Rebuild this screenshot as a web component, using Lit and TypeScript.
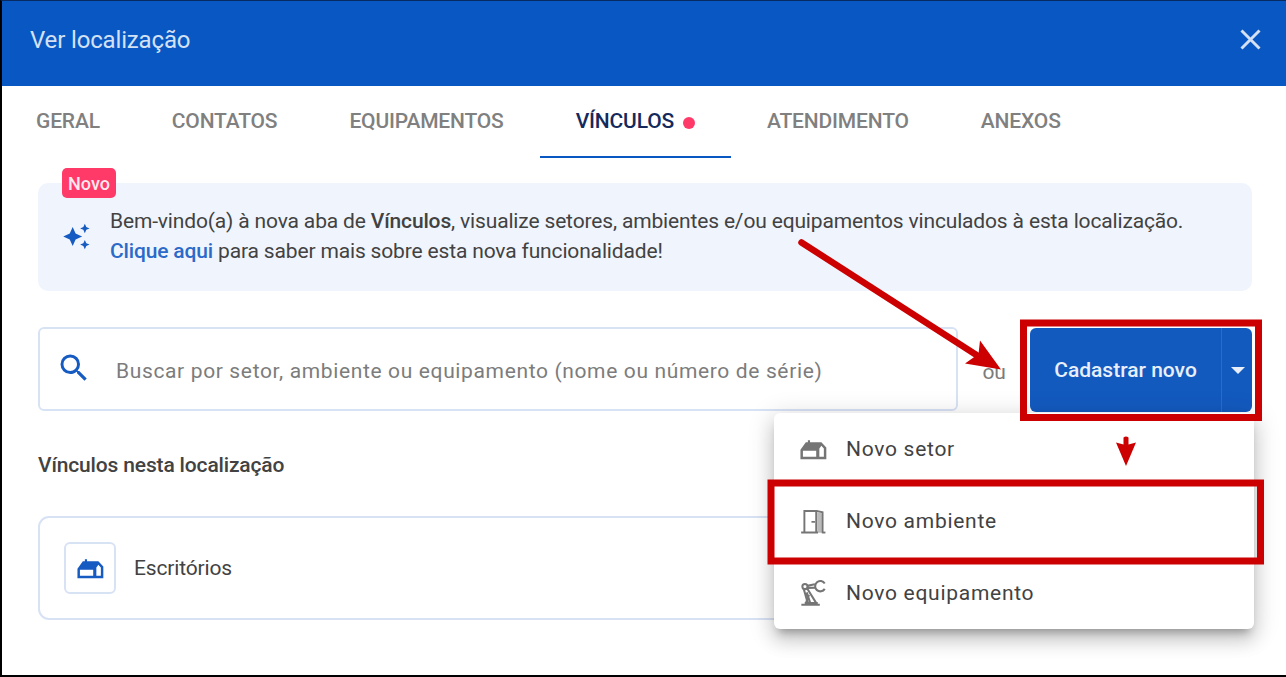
import { LitElement, css, html, svg } from 'lit';
import { customElement, property } from 'lit/decorators.js';

const icons: Record<string, unknown> = {
  close: svg`<path d="M4 4L20 20M20 4L4 20" fill="none" stroke="currentColor" stroke-width="2.6"/>`,
  search: svg`<path d="M15.5 14h-.79l-.28-.27A6.47 6.47 0 0 0 16 9.5 6.5 6.5 0 1 0 9.5 16c1.61 0 3.09-.59 4.23-1.57l.27.28v.79l5 4.99L20.49 19l-4.99-5zm-6 0C7.01 14 5 11.99 5 9.5S7.01 5 9.5 5 14 7.01 14 9.5 11.99 14 9.5 14z"/>`,
  sparkle: svg`<path d="M8.6 3.6L11.2 9.4L17 12L11.2 14.6L8.6 20.4L6 14.6L.2 12L6 9.4ZM19.4 .6L20.7 3.5L23.6 4.8L20.7 6.1L19.4 9L18.1 6.1L15.2 4.8L18.1 3.5ZM19.4 15L20.7 17.9L23.6 19.2L20.7 20.5L19.4 23.4L18.1 20.5L15.2 19.2L18.1 17.9Z"/>`,
  sector: svg`<path fill-rule="evenodd" d="M.4 20.6V12.2L5.2 5.6H7V3.8H8.9V5.6H19L23.4 10.2V20.6ZM2.6 13V18.4H14.4V13ZM17.2 18.4V11L19 8.6L21.2 11.2V18.4Z"/>`,
  door: svg`<path d="M1 21.8H16M3.9 21.8V2.6H14.4V21.8M10.2 12.3H13.3" fill="none" stroke="currentColor" stroke-width="1.7"/>
    <path d="M14.6 2.6L20.1 3.8V21.8" fill="none" stroke="currentColor" stroke-width="1.6"/>
    <path d="M15.4 3.8L19.5 4.6V22H15.4Z" opacity=".5"/>
    <path d="M19.4 21.8H22.6" stroke="currentColor" stroke-width="1.7"/>`,
  robot: svg`<g fill="none" stroke="currentColor" stroke-width="1.8">
    <circle cx="4.4" cy="5.8" r="2.3"/>
    <path d="M6.6 5.2L13.2 3.7M6.8 7L13.4 6.8M3.2 7.6L7 20.8M6.4 7.6L14.6 20.8M6 11L9.2 20.8M8 13.2L5.4 20M1.2 22H17.6M4.2 20.4H15.8"/>
    <path d="M22 3.1A4.6 4.6 0 1 0 22 7.9"/>
    </g>`,
};

@customElement('ui-icon')
export class UiIcon extends LitElement {

  static get styles() {
    return css`
      :host {
        display: block;
        flex: none;
        width: 27px;
        height: 27px;
      }

      svg {
        display: block;
        width: 100%;
        height: 100%;
        fill: currentColor;
      }
    `;
  }

  @property()
  name = 'search';

  render() {
    return html`<svg viewBox="0 0 24 24">${icons[this.name]}</svg>`;
  }
}

@customElement('app-root')
export class AppRoot extends LitElement {

  static get styles() {
    return css`
      :host {
        display: block;
        font-family: Roboto, sans-serif;
        font-size: 21px;
        letter-spacing: -.155px;
        color: #424242;
      }

      * {
        box-sizing: border-box;
      }

      .dialog {
        position: relative;
        width: 1286px;
        height: 677px;
        overflow: hidden;
        background: #fff;
        border-left: 2px solid #000;
        border-top: 1px solid #082a63;
        border-bottom: 2px solid #000;
      }

      .header {
        display: flex;
        align-items: center;
        justify-content: space-between;
        height: 85px;
        padding: 0 22px 7px 28px;
        background: #0957c3;
        color: #d4e1f5;
      }

      .header ui-icon {
        margin-bottom: 2px;
      }

      .title {
        font-size: 24px;
      }

      .tabs {
        display: flex;
        height: 72px;
      }

      .tab {
        display: flex;
        align-items: center;
        padding: 0 36px 2px;
        white-space: nowrap;
        font-weight: 500;
        letter-spacing: -.17px;
        color: #808080;
      }

      .tab:first-child {
        padding-left: 34px;
      }

      .active {
        color: #14295c;
        border-bottom: 2px solid #0957c3;
        padding-bottom: 0;
      }

      .dot {
        width: 12px;
        height: 12px;
        margin: 4px 0 0 9px;
        border-radius: 50%;
        background: #ff3a69;
      }

      .content {
        padding: 25px 34px 0 36px;
      }

      .banner {
        position: relative;
        display: flex;
        align-items: center;
        gap: 20px;
        height: 108px;
        padding: 0 25px 2px;
        border-radius: 10px;
        background: #f0f5fd;
        line-height: 30px;
      }

      .message {
        margin: 0;
        white-space: nowrap;
      }

      .message strong {
        font-weight: 500;
      }

      .badge {
        position: absolute;
        top: -15px;
        left: 24px;
        width: 54px;
        height: 30px;
        border-radius: 5px;
        background: #ff3a69;
        color: #ffe9ef;
        font-size: 18px;
        font-weight: 500;
        letter-spacing: 0;
        line-height: 31px;
        text-align: center;
      }

      .blue {
        color: #165bc2;
      }

      .link {
        color: #2b6ac9;
        font-weight: 500;
      }

      .toolbar {
        display: flex;
        align-items: flex-start;
        margin-top: 36px;
      }

      .search {
        display: flex;
        align-items: center;
        gap: 24px;
        width: 920px;
        height: 84px;
        padding: 0 16px;
        border: 2px solid #d8e2f5;
        border-radius: 6px;
        color: #7c7c7c;
        letter-spacing: .64px;
      }

      .search ui-icon {
        width: 36px;
        height: 36px;
        margin-top: -2px;
      }

      .placeholder {
        padding-top: 4px;
        white-space: nowrap;
      }

      .or {
        width: 72px;
        padding-top: 4px;
        line-height: 82px;
        text-align: center;
        color: #7c7c7c;
      }

      .split {
        display: flex;
        height: 84px;
        margin-top: 1px;
        border-radius: 6px;
        overflow: hidden;
        background: #135abf;
        color: #e8effa;
        font-weight: 500;
        letter-spacing: 0;
      }

      .create {
        display: flex;
        align-items: center;
        justify-content: center;
        width: 191px;
        white-space: nowrap;
      }

      .toggle {
        display: flex;
        align-items: center;
        justify-content: center;
        width: 31px;
        padding-left: 2px;
        border-left: 1px solid #2c6cc8;
      }

      .caret {
        border: 7.5px solid transparent;
        border-top-color: #e8effa;
        border-bottom: 0;
      }

      .heading {
        margin: 38px 0 0;
        font-size: 21px;
        font-weight: 500;
        line-height: 28px;
      }

      .card {
        display: flex;
        align-items: center;
        gap: 18px;
        height: 104px;
        margin-top: 37px;
        padding: 0 24px;
        border: 2px solid #d8e2f5;
        border-radius: 11px;
      }

      .thumb {
        display: flex;
        align-items: center;
        justify-content: center;
        width: 52px;
        height: 52px;
        border: 2px solid #d8e2f5;
        border-radius: 6px;
      }

      .menu {
        position: absolute;
        top: 412px;
        left: 772px;
        width: 480px;
        height: 216px;
        border-radius: 6px;
        background: #fff;
        box-shadow: 0 8px 8px -5px rgba(0, 0, 0, .28), 0 12px 18px 1px rgba(0, 0, 0, .13), 0 4px 24px 4px rgba(0, 0, 0, .12);
      }

      .item {
        display: flex;
        align-items: center;
        gap: 19px;
        height: 72px;
        padding: 0 26px;
        letter-spacing: .72px;
      }

      .item ui-icon {
        color: #757575;
      }

      .notes {
        position: absolute;
        top: -1px;
        left: -2px;
        fill: #cc0000;
      }

      .outline {
        fill: none;
        stroke: #cc0000;
        stroke-width: 7;
      }

      .shaft {
        stroke: #cc0000;
        stroke-width: 6.5;
        stroke-linecap: round;
      }
    `;
  }

  private tabs = ['GERAL', 'CONTATOS', 'EQUIPAMENTOS', 'VÍNCULOS', 'ATENDIMENTO', 'ANEXOS']

  private menuItems = [
    { icon: 'sector', label: 'Novo setor' },
    { icon: 'door', label: 'Novo ambiente' },
    { icon: 'robot', label: 'Novo equipamento' },
  ]

  @property()
  activeTab = 'VÍNCULOS';

  renderTab(tab: string) {
    const active = tab === this.activeTab
    return html`
      <div class="tab ${active ? 'active' : ''}">
        <span>${tab}</span>
        ${active ? html`<span class="dot"></span>` : ''}
      </div>
    `;
  }

  render() {
    return html`
    <div class="dialog">
        <div class="header">
          <span class="title">Ver localização</span>
          <ui-icon name="close"></ui-icon>
        </div>

        <div class="tabs">${this.tabs.map(tab => this.renderTab(tab))}</div>

        <div class="content">
          <div class="banner">
            <span class="badge">Novo</span>
            <ui-icon class="blue" name="sparkle"></ui-icon>
            <p class="message">
              Bem-vindo(a) à nova aba de <strong>Vínculos</strong>, visualize setores, ambientes e/ou equipamentos vinculados à esta localização.<br>
              <span class="link">Clique aqui</span> para saber mais sobre esta nova funcionalidade!
            </p>
          </div>

          <div class="toolbar">
            <div class="search">
              <ui-icon class="blue" name="search"></ui-icon>
              <span class="placeholder">Buscar por setor, ambiente ou equipamento (nome ou número de série)</span>
            </div>
            <span class="or">ou</span>
            <div class="split">
              <div class="create">Cadastrar novo</div>
              <div class="toggle"><span class="caret"></span></div>
            </div>
          </div>

          <h2 class="heading">Vínculos nesta localização</h2>

          <div class="card">
            <div class="thumb"><ui-icon class="blue" name="sector"></ui-icon></div>
            <span>Escritórios</span>
          </div>
        </div>

        <div class="menu">
          ${this.menuItems.map(item => html`
            <div class="item">
              <ui-icon name=${item.icon}></ui-icon>
              <span>${item.label}</span>
            </div>
          `)}
        </div>

        <!-- red walkthrough marks drawn over the dialog -->
        <svg class="notes" width="1286" height="677" viewBox="0 0 1286 677">
          <rect class="outline" x="1023.5" y="323" width="235" height="94.5"/>
          <rect class="outline" x="771" y="483" width="489.5" height="78"/>
          <line class="shaft" x1="801.5" y1="242.5" x2="978" y2="356"/>
          <path d="M1001 369.5L980 340.5L978.5 354L965 363.5Z"/>
          <path d="M1123.5 437.5Q1126 435.5 1128.5 437.5V444.5L1136 442.5L1126 466L1116 442.5L1123.5 444.5Z"/>
        </svg>
    </div>
    `;
  }
}
